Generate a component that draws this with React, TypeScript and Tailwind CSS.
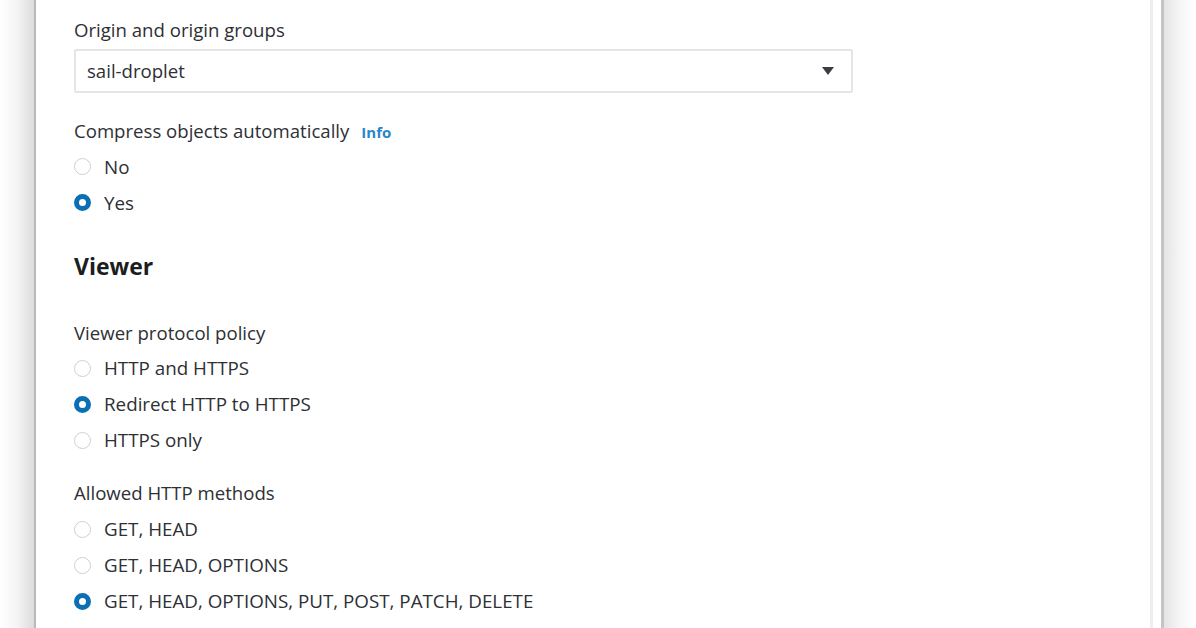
import React from "react";

function Radio({ checked, label }: { checked?: boolean; label: string }) {
  return (
    <div className="flex items-center h-[36px]">
      <span
        className={
          checked
            ? "w-[17px] h-[17px] rounded-full border-[5px] border-[#0a6fb3] bg-white shrink-0"
            : "w-[17px] h-[17px] rounded-full border-[1.5px] border-[#cdd0d3] bg-white shrink-0"
        }
      />
      <span className="ml-[13px] text-[18.8px] font-medium text-[#2d3035]">{label}</span>
    </div>
  );
}

export default function App() {
  return (
    <div
      className="w-[1196px] h-[628px] bg-white flex overflow-hidden"
      style={{ fontFamily: '"Open Sans", "Noto Sans", sans-serif' }}
    >
      <div className="w-[34px] h-full bg-gradient-to-r from-white via-[#f4f4f4] to-[#dcdcdc] shrink-0" />
      <div className="w-[2px] h-full bg-[#b9b9b9] shrink-0" />
      <div className="flex-1 h-full bg-white pl-[38px] flex flex-col">
        <div className="mt-[16px] text-[18.6px] text-[#2d3035]">Origin and origin groups</div>
        <div className="mt-[5px] w-[779px] h-[44px] border-[2px] border-[#e3e5e7] rounded-[2px] flex items-center justify-between pl-[11px] pr-[16px]">
          <span className="text-[18.6px] text-[#2d3035]">sail-droplet</span>
          <svg width="14" height="10" viewBox="0 0 14 10">
            <path d="M1 1 L13 1 L7 9 Z" fill="#3a3d42" />
          </svg>
        </div>
        <div className="mt-[24px] flex items-baseline">
          <span className="text-[18.6px] text-[#2d3035]">Compress objects automatically</span>
          <span className="ml-[12px] text-[15px] font-bold text-[#2a86c8]">Info</span>
        </div>
        <div className="mt-[4px] flex flex-col">
          <Radio label="No" />
          <Radio checked label="Yes" />
        </div>
        <div className="mt-[28px] text-[23px] font-bold text-[#1b1d20]">Viewer</div>
        <div className="mt-[36px] text-[18.6px] text-[#2d3035]">Viewer protocol policy</div>
        <div className="mt-[3px] flex flex-col">
          <Radio label="HTTP and HTTPS" />
          <Radio checked label="Redirect HTTP to HTTPS" />
          <Radio label="HTTPS only" />
        </div>
        <div className="mt-[21px] text-[18.6px] text-[#2d3035]">Allowed HTTP methods</div>
        <div className="mt-[4px] flex flex-col">
          <Radio label="GET, HEAD" />
          <Radio label="GET, HEAD, OPTIONS" />
          <Radio checked label="GET, HEAD, OPTIONS, PUT, POST, PATCH, DELETE" />
        </div>
      </div>
      <div className="w-[3px] h-full bg-[#eeeeee] shrink-0" />
      <div className="w-[8px] h-full bg-white shrink-0" />
      <div className="w-[3px] h-full bg-[#c4c4c4] shrink-0" />
      <div className="w-[32px] h-full bg-gradient-to-r from-[#e4e4e4] via-[#f6f6f6] to-white shrink-0" />
    </div>
  );
}
